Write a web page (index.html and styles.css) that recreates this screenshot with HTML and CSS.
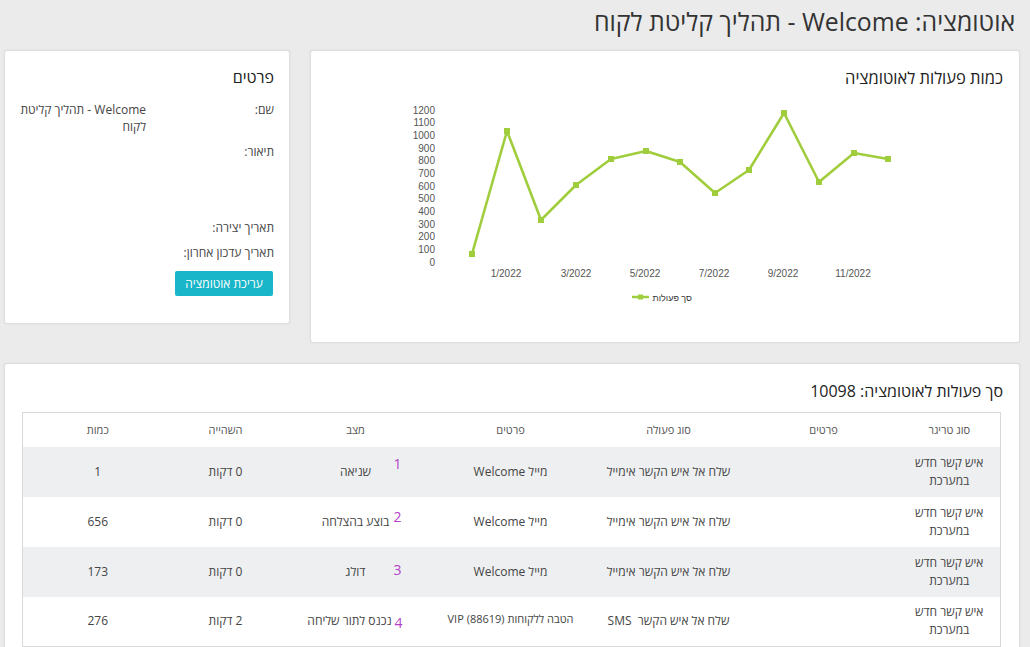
FILE: index.html
```html
<!DOCTYPE html>
<html lang="he" dir="rtl">
<head>
<meta charset="utf-8">
<title>אוטומציה</title>
<link rel="stylesheet" href="styles.css">
</head>
<body>
<div class="page">
  <h1 class="page-title">אוטומציה: Welcome - תהליך קליטת לקוח</h1>

  <div class="top-row">
    <section class="card chart-card">
      <h2 class="card-title">כמות פעולות לאוטומציה</h2>
      <svg class="chart" width="674" height="230" viewBox="0 0 674 230">
        <g class="y-labels">
          <text x="106" y="25.5">1200</text>
          <text x="106" y="38.2">1100</text>
          <text x="106" y="50.8">1000</text>
          <text x="106" y="63.5">900</text>
          <text x="106" y="76.2">800</text>
          <text x="106" y="88.8">700</text>
          <text x="106" y="101.5">600</text>
          <text x="106" y="114.2">500</text>
          <text x="106" y="126.8">400</text>
          <text x="106" y="139.5">300</text>
          <text x="106" y="152.2">200</text>
          <text x="106" y="164.8">100</text>
          <text x="106" y="177.5">0</text>
        </g>
        <g class="x-labels">
          <text x="177" y="188.5">1/2022</text>
          <text x="247" y="188.5">3/2022</text>
          <text x="316" y="188.5">5/2022</text>
          <text x="385" y="188.5">7/2022</text>
          <text x="454" y="188.5">9/2022</text>
          <text x="524" y="188.5">11/2022</text>
        </g>
        <polyline class="series" points="143,166 178,43 212,132 247,97 282,71 317,63 351,74 386,105 420,82 455,25 490,94 525,65 559,71"/>
        <g class="markers">
          <rect x="140" y="163" width="6" height="6"/>
          <rect x="175" y="40" width="6" height="6"/>
          <rect x="209" y="129" width="6" height="6"/>
          <rect x="244" y="94" width="6" height="6"/>
          <rect x="279" y="68" width="6" height="6"/>
          <rect x="314" y="60" width="6" height="6"/>
          <rect x="348" y="71" width="6" height="6"/>
          <rect x="383" y="102" width="6" height="6"/>
          <rect x="417" y="79" width="6" height="6"/>
          <rect x="452" y="22" width="6" height="6"/>
          <rect x="487" y="91" width="6" height="6"/>
          <rect x="522" y="62" width="6" height="6"/>
          <rect x="556" y="68" width="6" height="6"/>
        </g>
        <g class="legend">
          <line x1="303" y1="209" x2="320" y2="209"/>
          <rect x="309" y="206.5" width="5" height="5"/>
          <text x="363" y="212.5">סך פעולות</text>
        </g>
      </svg>
    </section>

    <section class="card details-card">
      <h2 class="card-title">פרטים</h2>
      <div class="details">
        <div class="d-label">שם:</div>
        <div class="d-value">Welcome - תהליך קליטת לקוח</div>
        <div class="d-label d-desc">תיאור:</div>
        <div class="d-value d-desc"></div>
        <div class="d-label">תאריך יצירה:</div>
        <div class="d-value"></div>
        <div class="d-label">תאריך עדכון אחרון:</div>
        <div class="d-value"></div>
      </div>
      <button class="edit-btn" type="button">עריכת אוטומציה</button>
    </section>
  </div>

  <section class="card table-card">
    <h2 class="card-title">סך פעולות לאוטומציה: 10098</h2>
    <table class="actions">
      <colgroup>
        <col class="c1"><col class="c2"><col class="c3"><col class="c4"><col class="c5"><col class="c6"><col class="c7">
      </colgroup>
      <thead>
        <tr>
          <th>סוג טריגר</th>
          <th>פרטים</th>
          <th>סוג פעולה</th>
          <th>פרטים</th>
          <th>מצב</th>
          <th>השהייה</th>
          <th>כמות</th>
        </tr>
      </thead>
      <tbody>
        <tr class="shade">
          <td class="trigger">איש קשר חדש במערכת</td>
          <td></td>
          <td>שלח אל איש הקשר אימייל</td>
          <td>מייל Welcome</td>
          <td class="status"><span class="num n1">1</span>שניאה</td>
          <td>0 דקות</td>
          <td>1</td>
        </tr>
        <tr>
          <td class="trigger">איש קשר חדש במערכת</td>
          <td></td>
          <td>שלח אל איש הקשר אימייל</td>
          <td>מייל Welcome</td>
          <td class="status"><span class="num n2">2</span>בוצע בהצלחה</td>
          <td>0 דקות</td>
          <td>656</td>
        </tr>
        <tr class="shade">
          <td class="trigger">איש קשר חדש במערכת</td>
          <td></td>
          <td>שלח אל איש הקשר אימייל</td>
          <td>מייל Welcome</td>
          <td class="status"><span class="num n3">3</span>דולג</td>
          <td>0 דקות</td>
          <td>173</td>
        </tr>
        <tr>
          <td class="trigger">איש קשר חדש במערכת</td>
          <td></td>
          <td>שלח אל איש הקשר&nbsp; SMS</td>
          <td class="small">הטבה ללקוחות (88619) VIP</td>
          <td class="status st4"><span class="num n4">4</span>נכנס לתור שליחה</td>
          <td>2 דקות</td>
          <td>276</td>
        </tr>
      </tbody>
    </table>
  </section>
</div>
</body>
</html>
```

FILE: styles.css
```css
* { box-sizing: border-box; }

html, body {
  margin: 0;
  padding: 0;
}

body {
  width: 1030px;
  height: 647px;
  overflow: hidden;
  background: #ebebeb;
  font-family: "Open Sans", "DejaVu Sans", sans-serif;
  color: #333;
}

.page {
  padding: 0 10px 0 4px;
}

.page-title {
  margin: 0;
  height: 50px;
  padding-right: 5px;
  font-size: 24.8px;
  font-weight: 400;
  line-height: 42px;
  color: #333;
}

.top-row {
  display: flex;
  gap: 20px;
  align-items: flex-start;
}

.card {
  background: #fff;
  border: 1px solid #dedede;
  border-radius: 3px;
  box-shadow: 0 0 2px rgba(0, 0, 0, 0.08);
}

.card-title {
  margin: 0;
  font-size: 16px;
  font-weight: 400;
  line-height: 20px;
  color: #222;
}

/* chart */
.chart-card {
  flex: 1;
  height: 293px;
  padding: 17px 16px 0 18px;
}

.chart-card .card-title {
  font-size: 16.5px;
}

.chart {
  display: block;
  direction: ltr;
}

.y-labels text {
  font-family: "Liberation Sans", Arial, sans-serif;
  font-size: 10px;
  fill: #555;
  text-anchor: end;
}

.x-labels text {
  font-family: "Liberation Sans", Arial, sans-serif;
  font-size: 10px;
  fill: #555;
  text-anchor: middle;
}

.series {
  fill: none;
  stroke: #a0cd3c;
  stroke-width: 2.6;
  stroke-linejoin: round;
}

.markers rect {
  fill: #a0cd3c;
}

.legend line {
  stroke: #a0cd3c;
  stroke-width: 2.5;
}

.legend rect {
  fill: #a0cd3c;
}

.legend text {
  font-family: "Liberation Sans", Arial, sans-serif;
  font-size: 9px;
  fill: #333;
  text-anchor: end;
}

/* details */
.details-card {
  width: 286px;
  height: 274px;
  padding: 16px 15px 0 8px;
}

.details {
  display: grid;
  grid-template-columns: 128px 1fr;
  row-gap: 8px;
  margin-top: 14px;
  font-size: 12px;
  line-height: 17px;
  color: #444;
}

.d-desc {
  min-height: 68px;
}

.edit-btn {
  display: block;
  width: 98px;
  height: 25px;
  margin: 10px 1px 0 0;
  padding: 0;
  border: none;
  border-radius: 2px;
  background: #19b5c9;
  color: #fff;
  font-family: inherit;
  font-size: 12px;
  font-weight: 500;
  line-height: 25px;
}

/* table */
.table-card {
  margin-top: 20px;
  height: 300px;
  padding: 17px 16px 0 17px;
}

.actions {
  width: 978px;
  margin: 11px 2px 0 0;
  border-collapse: collapse;
  border: 1px solid #d9d9d9;
  table-layout: fixed;
  font-size: 12px;
  color: #444;
}

.c1 { width: 102px; }
.c2 { width: 150px; }
.c3 { width: 160px; }
.c4 { width: 156px; }
.c5 { width: 154px; }
.c6 { width: 106px; }
.c7 { width: 150px; }

.actions th {
  height: 34px;
  padding: 0;
  font-size: 11px;
  font-weight: 400;
  color: #555;
  text-align: center;
  vertical-align: middle;
}

.actions td {
  height: 50px;
  padding: 0 4px;
  text-align: center;
  vertical-align: middle;
  line-height: 18px;
}

.actions tr.shade td {
  background: #eeeff1;
}

.actions td.trigger {
  padding: 0 12px;
}

.actions td.small {
  font-size: 11px;
  padding-bottom: 5px;
}

.actions td.status {
  position: relative;
}

.actions td.st4 {
  padding-left: 0;
  padding-right: 12px;
}

.num {
  position: absolute;
  right: 31px;
  font-size: 14px;
  line-height: 16px;
  color: #b43fc6;
}

.n1 { top: 9px; }
.n2 { top: 12px; }
.n3 { top: 15px; }
.n4 { top: 18px; right: 30px; }
```
